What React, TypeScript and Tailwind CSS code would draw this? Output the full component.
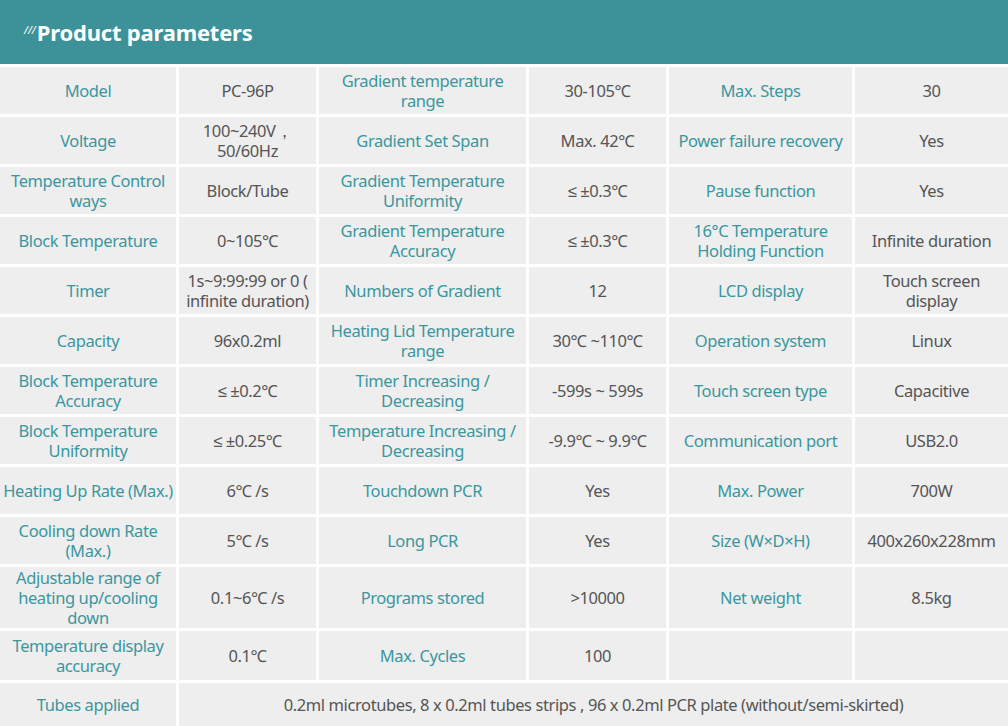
import React from "react";

const rows: [string, string, string, string, string, string][] = [
  ["Model", "PC-96P", "Gradient temperature range", "30-105℃", "Max. Steps", "30"],
  ["Voltage", "100~240V，\n50/60Hz", "Gradient Set Span", "Max. 42℃", "Power failure recovery", "Yes"],
  ["Temperature Control ways", "Block/Tube", "Gradient Temperature Uniformity", "≤ ±0.3℃", "Pause function", "Yes"],
  ["Block Temperature", "0~105℃", "Gradient Temperature Accuracy", "≤ ±0.3℃", "16°C Temperature Holding Function", "Infinite duration"],
  ["Timer", "1s~9:99:99 or 0 (\ninfinite duration)", "Numbers of Gradient", "12", "LCD display", "Touch screen\ndisplay"],
  ["Capacity", "96x0.2ml", "Heating Lid Temperature range", "30℃ ~110℃", "Operation system", "Linux"],
  ["Block Temperature Accuracy", "≤ ±0.2℃", "Timer Increasing / Decreasing", "-599s ~ 599s", "Touch screen type", "Capacitive"],
  ["Block Temperature Uniformity", "≤ ±0.25℃", "Temperature Increasing / Decreasing", "-9.9℃ ~ 9.9℃", "Communication port", "USB2.0"],
  ["Heating Up Rate (Max.)", "6℃ /s", "Touchdown PCR", "Yes", "Max. Power", "700W"],
  ["Cooling down Rate (Max.)", "5℃ /s", "Long PCR", "Yes", "Size (W×D×H)", "400x260x228mm"],
  ["Adjustable range of heating up/cooling down", "0.1~6℃ /s", "Programs stored", ">10000", "Net weight", "8.5kg"],
  ["Temperature display accuracy", "0.1℃", "Max. Cycles", "100", "", ""],
];

const cell = "bg-[#eeeeee] flex items-center justify-center text-center leading-[20px] px-[2px] whitespace-pre-line";

export default function App() {
  return (
    <div className="w-[1008px] h-[726px] bg-white overflow-hidden" style={{ fontFamily: '"Noto Sans", sans-serif' }}>
      <div className="h-[64px] bg-[#3d9198] flex items-center pl-[24px] mb-[3px]">
        <span className="text-white text-[11px] italic mr-[1px] mt-[-4px]">///</span>
        <span className="text-white font-bold text-[22px] tracking-[-0.2px]">Product parameters</span>
      </div>
      <div className="grid grid-cols-[176px_137px_207px_137px_183px_1fr] grid-rows-[repeat(10,47px)_61px_49px_43px] gap-[3px] text-[16.5px] tracking-[-0.4px]">
        {rows.map((r, i) =>
          r.map((t, j) => (
            <div key={i + "-" + j} className={cell + (j % 2 === 0 ? " text-[#3a97a0]" : " text-[#555555]")}>
              {t}
            </div>
          ))
        )}
        <div className={cell + " text-[#3a97a0]"}>Tubes applied</div>
        <div className={cell + " text-[#555555] col-span-5"}>
          0.2ml microtubes, 8 x 0.2ml tubes strips , 96 x 0.2ml PCR plate (without/semi-skirted)
        </div>
      </div>
    </div>
  );
}
